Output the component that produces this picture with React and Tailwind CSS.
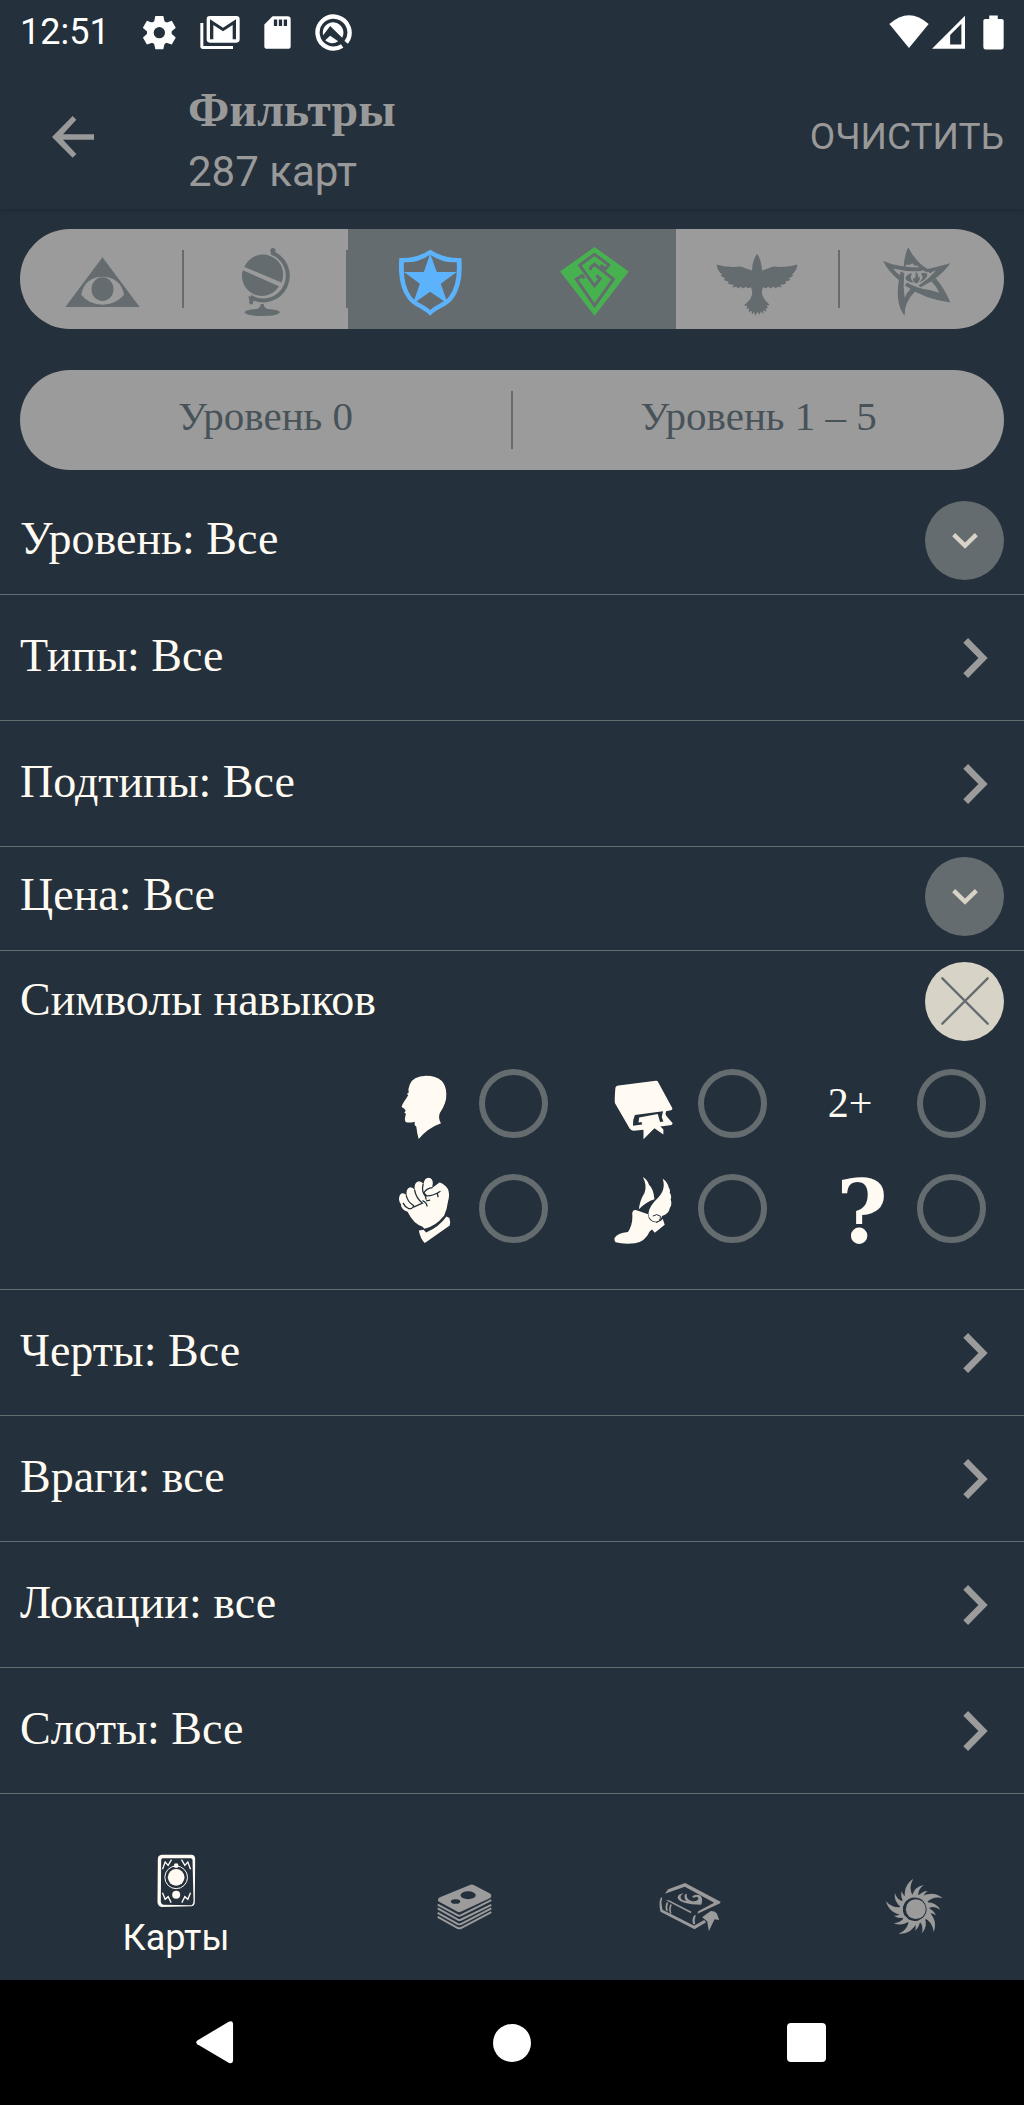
import React, { useState } from "react";

function Icon({ box, children, className = "" }) {
  return (
    <svg
      viewBox={box.join(" ")}
      width={Math.round(box[2] / 3)}
      height={Math.round(box[3] / 3)}
      fill="currentColor"
      aria-hidden="true"
      className={"shrink-0 " + className}
    >
      {children}
    </svg>
  );
}

/* ---------- status bar ---------- */

const gearTeeth = [0, 60, 120, 180, 240, 300];

function GearIcon() {
  return (
    <Icon box={[430, 39, 99, 111]}>
      <mask id="gear-hole">
        <rect x="430" y="39" width="99" height="111" fill="white" />
        <circle cx="479" cy="95" r="17" fill="black" />
      </mask>
      <g mask="url(#gear-hole)">
        <circle cx="479" cy="95" r="37" />
        {gearTeeth.map((a) => (
          <path key={a} d="M463 64 L467 45 H491 L495 64 Z" transform={`rotate(${a} 479 95)`} />
        ))}
      </g>
    </Icon>
  );
}

function MailIcon() {
  return (
    <Icon box={[593, 39, 120, 111]}>
      <path d="M594 66 H603 V135 H692 V144 H602 Q594 144 594 136 Z" />
      <path
        fillRule="evenodd"
        d="M622 45 H702 Q712 45 712 55 V115 Q712 125 702 125 H622 Q613 125 613 115 V55 Q613 45 622 45 Z M623 55 V115 H633 V72 L662 91 L691 72 V115 H701 V55 L662 80 Z"
      />
    </Icon>
  );
}

function SdIcon() {
  return (
    <Icon box={[785, 39, 82, 111]}>
      <path
        fillRule="evenodd"
        d="M811 45 H857 Q866 45 866 54 V136 Q866 144 857 144 H795 Q786 144 786 136 V70 Z M815 55 V75 H825 V55 Z M830 55 V75 H840 V55 Z M845 55 V75 H855 V55 Z"
      />
    </Icon>
  );
}

function QIcon() {
  return (
    <Icon box={[945, 39, 110, 111]}>
      <path
        fill="none"
        stroke="currentColor"
        strokeWidth="13"
        d="M1026 135 A48 48 0 1 1 1038 124"
      />
      <path d="M1014 121 A31 31 0 0 1 975 118 L990 104 Z" />
      <path d="M969 103 A31 31 0 1 1 1026 110 L990 75 Z" />
    </Icon>
  );
}

function WifiIcon() {
  return (
    <Icon box={[1130, 39, 120, 108]}>
      <path d="M1131 69 Q1190 16 1249 69 L1190 141 Z" />
    </Icon>
  );
}

function SignalIcon() {
  return (
    <Icon box={[1257, 39, 100, 108]}>
      <path fillRule="evenodd" d="M1357 44 V144 H1257 Z M1346 68 L1312 102 V131 H1346 Z" />
    </Icon>
  );
}

function BatteryIcon() {
  return (
    <Icon box={[1412, 39, 64, 108]}>
      <path d="M1431 43 H1457 V53 H1469 Q1475 53 1475 59 V139 Q1475 146 1469 146 H1419 Q1413 146 1413 139 V59 Q1413 53 1419 53 H1431 Z" />
    </Icon>
  );
}

/* ---------- faction icons ---------- */

function MysticIcon() {
  return (
    <Icon box={[192, 96, 230, 208]}>
      <path
        fillRule="evenodd"
        d="M198 277 L310 127 L422 277 Z M246 240 Q256 187 310 186 Q364 187 375 240 Q350 270 310 270 Q270 270 246 240 Z"
      />
      <ellipse cx="310" cy="223" rx="33" ry="36" />
    </Icon>
  );
}

function GlobeIcon() {
  return (
    <Icon box={[723, 96, 150, 208]}>
      <path d="M736 156 A60 60 0 0 1 848 203 Z" />
      <path d="M731 166 A60 60 0 0 0 840 214 Z" />
      <path fill="none" stroke="currentColor" strokeWidth="12" d="M817 113 A74 74 0 1 1 754 246" />
      <circle cx="822" cy="107" r="8" />
      <path d="M748 244 L762 250 L763 262 Q762 270 755 269 Q748 266 751 259 Z" />
      <path d="M785 268 H794 Q795 280 806 283 Q843 286 843 293 Q838 304 790 304 Q741 304 736 293 Q738 286 772 283 Q785 280 785 268 Z" />
    </Icon>
  );
}

function GuardianIcon() {
  return (
    <Icon box={[177, 96, 190, 208]}>
      <path
        fillRule="evenodd"
        d="M271 104 Q314 132 365 129 Q372 210 340 252 C325 275 292 280 271 303 C250 280 218 275 203 252 Q171 210 178 129 Q230 132 271 104 Z M271 119 Q234 144 192 142 Q188 210 214 245 C226 262 252 268 271 286 C290 268 316 262 328 245 Q355 210 351 142 Q308 144 271 119 Z"
      />
      <path d="M271 116 L291 171 L351 171 L303 207 L324 267 L271 231 L219 267 L240 207 L192 171 L252 171 Z" />
    </Icon>
  );
}

function RogueIcon() {
  return (
    <Icon box={[657, 96, 208, 208]}>
      <path d="M761 96 L864 170 L761 303 L657 170 Z" />
      <g fill="none" stroke="#656c6f" strokeWidth="9">
        <path d="M779 151 L794 162 L804 150 L761 118 L716 151 L761 213 L778 191 L766 182" />
        <path d="M749 165 V158 L761 148 L818 193 L761 273 L706 193 L724 182 L730 191" />
      </g>
    </Icon>
  );
}

function BirdIcon() {
  return (
    <Icon box={[140, 96, 246, 208]}>
      <path d="M141 149 Q170 159 214 155 Q232 162 248 167 Q249 135 263 116 Q277 135 278 167 Q294 162 312 155 Q356 159 385 149 Q384 163 374 174 L368 178 L373 181 Q366 188 358 190 L364 195 Q356 200 348 200 L351 205 Q343 211 333 209 L337 218 L326 216 L320 220 L312 216 L304 221 L297 216 L290 220 L281 217 Q276 232 279 240 Q284 256 301 270 L292 273 L297 281 L289 280 L292 291 L283 286 L282 298 L275 290 L271 300 L265 292 L257 303 L254 291 L248 300 L246 288 L238 293 L239 281 L230 282 L234 275 L224 271 Q243 258 248 240 Q250 232 245 217 L236 220 L229 216 L222 221 L214 216 L206 220 L200 216 L189 218 L193 209 Q183 211 175 205 L178 200 Q170 200 162 195 L168 190 Q160 188 153 181 L158 178 L152 174 Q142 163 141 149 Z" />
    </Icon>
  );
}

function ElderIcon() {
  return (
    <Icon box={[634, 96, 238, 208]}>
      <path d="M710 97 Q735 146 775 166 L769 173 Q748 166 736 151 L730 153 L723 145 L712 151 L706 148 L696 160 Q698 120 710 97 Z" />
      <path d="M837 145 Q806 190 747 217 L741 212 Q775 190 793 167 Q782 170 776 176 L764 163 Q798 156 837 145 Z" />
      <path d="M837 263 Q760 254 700 212 L706 203 Q740 222 766 224 Q788 228 803 234 Q797 216 779 199 L793 190 Q820 222 837 263 Z" />
      <path d="M699 303 Q665 262 687 170 L698 174 Q694 212 699 249 Q704 235 718 221 L732 229 Q698 262 699 303 Z" />
      <path d="M634 138 Q680 158 754 158 L751 168 Q705 172 665 161 Q672 174 687 183 L683 197 Q650 170 634 138 Z" />
      <path d="M722 175 Q712 190 726 203 Q706 202 701 190 Q706 177 722 175 Z" />
      <path d="M748 176 Q764 170 768 180 Q764 196 744 203 Q756 190 752 183 Q750 178 748 176 Z" />
      <path d="M732 170 Q742 178 740 190 L745 184 Q746 200 735 206 Q721 202 726 188 L730 192 Q734 182 732 170 Z" />
    </Icon>
  );
}

/* ---------- skill icons ---------- */

function HeadIcon() {
  return (
    <Icon box={[95, 378, 138, 222]}>
      <path d="M97 501 Q96 496 110 476 L117 465 L112 462 L118 458 Q116 445 121 434 Q130 408 170 407 Q231 408 231 463 Q232 490 212 518 Q205 532 215 550 Q176 564 148 597 Q143 580 141 560 L136 555 L136 545 Q120 550 109 546 Q104 538 110 521 L105 518 L109 512 L105 506 Z" />
    </Icon>
  );
}

function BookSkillIcon() {
  return (
    <Icon box={[732, 378, 178, 222]}>
      <path
        fillRule="evenodd"
        d="M746 436 L858 422 Q863 421 865 426 L908 505 Q909 510 904 511 L889 514 Q886 521 890 528 L909 550 L906 555 L872 560 L881 569 V584 L854 565 L821 598 V570 L792 573 Q782 572 777 562 L735 490 Q733 485 736 445 Q736 437 746 436 Z M795 525 Q788 540 789 558 L817 554 L815 546 L806 548 L808 533 L864 522 L871 546 L881 545 L876 531 L880 514 Z"
      />
    </Icon>
  );
}

function FistIcon() {
  return (
    <Icon box={[84, 696, 158, 214]}>
      <path d="M86 775 Q87 757 98 757 Q106 757 109 765 Q106 742 120 739 Q129 739 134 748 Q130 724 146 721 Q155 721 160 729 Q163 710 175 710 Q189 712 188 728 L186 741 L208 725 Q222 728 234 745 Q240 762 234 781 Q231 805 222 825 Q195 858 163 864 L156 857 Q130 850 112 813 Q92 805 92 790 Q87 785 86 775 Z" />
      <path d="M146 869 L160 867 L168 875 Q208 858 229 827 L238 832 Q242 843 239 854 L164 907 Q150 893 146 869 Z" />
      <path
        fill="none"
        stroke="#24303c"
        strokeWidth="4"
        d="M108 763 Q111 782 130 794 Q128 806 113 803 M98 786 Q103 797 115 803 M133 747 Q138 773 157 787 L150 790 L130 799 M159 729 Q153 753 166 766 L168 776 M187 740 Q170 741 161 756 L170 765 Q190 765 211 751 M202 758 L204 769 M157 779 Q170 785 171 797 M168 780 L180 778"
      />
    </Icon>
  );
}

function FootIcon() {
  return (
    <Icon box={[733, 696, 175, 214]}>
      <path d="M735 891 Q743 878 775 874 Q791 851 788 818 Q789 805 801 808 L836 820 Q836 843 861 845 Q876 842 880 834 L886 852 L856 876 L848 866 L841 872 Q826 905 796 908 Q760 911 738 905 Q733 900 735 891 Z" />
      <path d="M820 708 Q834 716 839 732 Q852 742 855 775 Q830 783 808 805 Q811 778 825 756 Q834 735 820 708 Z" />
      <path d="M880 713 Q895 722 898 740 Q904 748 901 755 Q908 766 904 776 Q909 790 902 800 Q898 820 878 826 Q874 842 860 843 Q838 840 837 818 Q837 798 868 768 Q890 745 880 713 Z" />
      <path fill="none" stroke="#24303c" strokeWidth="3" d="M850 826 Q862 817 873 826 Q874 842 860 845 M815 800 L838 810" />
    </Icon>
  );
}

/* ---------- tab bar icons ---------- */

function CardIcon() {
  return (
    <Icon box={[470, 100, 116, 162]}>
      <path
        fillRule="evenodd"
        d="M484 102 H572 Q584 102 584 115 L583 245 Q582 257 572 257 L484 259 Q472 257 471 245 L472 115 Q472 103 484 102 Z M487 113 Q482 113 482 119 L481 243 Q482 251 489 252 L568 254 Q579 254 579 240 L576 118 Q576 113 570 113 Z"
      />
      <circle cx="527" cy="170" r="25" />
      <circle cx="527" cy="170" r="34" fill="none" stroke="currentColor" strokeWidth="3" />
      <circle cx="527" cy="135" r="7" />
      <circle cx="527" cy="222" r="12" />
      <path
        fill="none"
        stroke="currentColor"
        strokeWidth="4"
        d="M486 146 L494 124 L503 134 L513 117 M570 146 L562 124 L553 134 L543 117 M486 216 L494 236 L503 228 L512 246 M570 216 L562 236 L553 228 L544 246"
      />
    </Icon>
  );
}

function DeckIcon() {
  return (
    <Icon box={[1309, 198, 166, 139]}>
      <path
        fillRule="evenodd"
        d="M1410 200 Q1415 198 1420 201 L1469 227 Q1474 230 1473 235 Q1472 239 1467 242 L1381 282 Q1376 284 1371 282 L1314 251 Q1311 249 1312 244 Q1313 240 1318 238 Z M1380 232 A23 12 0 1 0 1426 232 A23 12 0 1 0 1380 232 Z M1351 251 A14 7 0 1 0 1379 251 A14 7 0 1 0 1351 251 Z"
      />
      <g fill="none" stroke="currentColor" strokeWidth="6">
        <path d="M1311 260 L1372 293 Q1376 295 1381 293 L1473 247" />
        <path d="M1311 272 L1372 306 Q1376 308 1381 306 L1473 261" />
        <path d="M1311 285 L1372 319 Q1376 321 1381 319 L1473 272" />
        <path d="M1311 297 L1372 331 Q1376 333 1381 331 L1473 283" />
      </g>
    </Icon>
  );
}

function CampaignIcon() {
  return (
    <Icon box={[431, 194, 197, 147]}>
      <path d="M460 226 L470 213 L521 194 L627 250 L626 255 L558 286 L560 279 L608 253 L520 205 Z" />
      <path d="M452 236 Q447 255 453 274 L548 322 L578 305 L584 312 L549 333 L447 280 Q441 255 447 240 Z" />
      <path d="M473 246 L540 280 L538 285 L463 246 Z" />
      <path d="M466 251 Q459 265 464 277 L469 279 Q465 265 470 254 Z M477 257 Q470 270 475 284 L480 286 Q475 272 481 260 Z" />
      <path d="M548 291 Q540 303 545 318 L551 318 Q548 303 553 291 Z" />
      <path d="M572 297 L584 288 L598 278 Q612 278 617 288 L623 305 L609 303 L592 339 L587 309 Z" />
      <path d="M517 225 Q500 226 498 238 Q505 258 569 259 Q577 240 565 231 Q550 225 541 236 L549 238 Q556 231 561 240 Q558 251 541 248 Q522 243 526 226 Q519 226 519 233 Q518 243 525 248 Q508 246 507 235 Q508 229 517 225 Z" />
    </Icon>
  );
}

const rays = [0, 72, 144, 216, 288];

function SunIcon() {
  return (
    <Icon box={[1105, 173, 190, 176]}>
      <circle cx="1210" cy="266" r="30" />
      <path
        fillRule="evenodd"
        d="M1207 221 A45 45 0 1 1 1206 221 Z M1207 231 A36 36 0 1 0 1237 286 A36 36 0 0 0 1207 231 Z"
      />
      {rays.map((a) => (
        <g key={a} transform={`rotate(${a} 1207 265)`}>
          <path d="M1178 238 Q1170 196 1202 175 Q1186 204 1202 228 Z" />
          <path d="M1198 228 Q1206 197 1234 193 Q1214 206 1218 230 Z" />
          <path d="M1215 228 Q1228 211 1246 211 Q1232 218 1233 236 Z" />
        </g>
      ))}
    </Icon>
  );
}

/* ---------- page ---------- */

const factions = [
  { id: "mystic", label: "Мистик", icon: MysticIcon, divider: true },
  { id: "seeker", label: "Искатель", icon: GlobeIcon, divider: true },
  { id: "guardian", label: "Защитник", icon: GuardianIcon, active: "text-[#5db3fb]" },
  { id: "rogue", label: "Ловкач", icon: RogueIcon, active: "text-[#48b14f]" },
  { id: "survivor", label: "Выживший", icon: BirdIcon, divider: true },
  { id: "neutral", label: "Нейтральные", icon: ElderIcon },
];

const skills = [
  { id: "willpower", label: "Воля", mark: <HeadIcon /> },
  { id: "intellect", label: "Интеллект", mark: <BookSkillIcon /> },
  {
    id: "double",
    label: "2+",
    mark: <span className="pr-6 font-['Liberation_Serif',serif] text-[42px]">2+</span>,
  },
  { id: "combat", label: "Бой", mark: <FistIcon /> },
  { id: "agility", label: "Ловкость", mark: <FootIcon /> },
  {
    id: "wild",
    label: "Любой",
    mark: (
      <span className="pt-2 font-['DejaVu_Serif',serif] text-[88px] leading-[69px] font-bold">?</span>
    ),
  },
];

function NavRow({ children }) {
  return (
    <button
      type="button"
      className="flex h-[126px] w-full items-center justify-between border-b border-[#656c6f] pr-9 pl-5 text-left"
    >
      <span className="pb-1">{children}</span>
      <Icon box={[0, 0, 75, 120]} className="text-[#9b9b9b]">
        <path fill="none" stroke="currentColor" strokeWidth="20" d="M8 7 L60 60 L8 113" />
      </Icon>
    </button>
  );
}

function ToggleRow({ children, open = false, line = true }) {
  return (
    <div
      className={
        "flex h-[104px] items-center justify-between px-5 pb-1 " +
        (line ? "border-b border-[#656c6f]" : "")
      }
    >
      <span className="pb-1">{children}</span>
      <button
        type="button"
        aria-expanded={open}
        aria-label="Развернуть"
        className={
          "flex size-[79px] items-center justify-center rounded-full " +
          (open ? "bg-[#d8d3c7] text-[#656c6f]" : "bg-[#656c6f] text-[#d8d3c7]")
        }
      >
        {open ? (
          <Icon box={[0, 0, 144, 144]}>
            <path
              fill="none"
              stroke="currentColor"
              strokeWidth="7"
              strokeLinecap="round"
              d="M4 4 L140 140 M140 4 L4 140"
            />
          </Icon>
        ) : (
          <Icon box={[0, 0, 78, 48]}>
            <path fill="none" stroke="currentColor" strokeWidth="13" d="M5 5 L39 38 L73 5" />
          </Icon>
        )}
      </button>
    </div>
  );
}

export default function App() {
  const [selected, setSelected] = useState(["guardian", "rogue"]);
  const toggle = (id) =>
    setSelected((s) => (s.includes(id) ? s.filter((x) => x !== id) : [...s, id]));

  return (
    <div className="flex min-h-screen flex-col bg-[#24303c] font-[Roboto,sans-serif]">
      <div className="flex h-16 items-center justify-between px-5 text-white">
        <div className="flex items-center">
          <span className="w-[123px] text-[36px]">12:51</span>
          <div className="flex items-center gap-6">
            <GearIcon />
            <MailIcon />
            <SdIcon />
            <QIcon />
          </div>
        </div>
        <div className="flex items-center">
          <WifiIcon />
          <span className="w-[3px]" />
          <SignalIcon />
          <span className="w-[18px]" />
          <BatteryIcon />
        </div>
      </div>

      <header className="flex h-[145px] items-center pr-5 pl-[52px] text-[#999999] shadow-[0_2px_4px_rgba(0,0,0,0.15)]">
        <button type="button" aria-label="Назад">
          <Icon box={[157, 344, 126, 126]}>
            <path d="M283 399 V415 H190 L230 458 L219 469 L157 407 L219 344 L230 355 L190 399 Z" />
          </Icon>
        </button>
        <div className="ml-[94px] flex-1 pt-2">
          <h1 className="font-['Liberation_Serif',serif] text-[48px] leading-[62px] font-bold">
            Фильтры
          </h1>
          <p className="text-[42px] leading-[62px]">287 карт</p>
        </div>
        <button type="button" className="text-[37px]">
          ОЧИСТИТЬ
        </button>
      </header>

      <main className="flex-1 pt-5 font-['Liberation_Serif',serif] text-[46px] text-[#fffbf2]">
        <div className="mx-5 flex h-[100px] overflow-hidden rounded-full bg-[#9b9b9b]">
          {factions.map(({ id, label, icon: Glyph, divider, active }) => {
            const on = selected.includes(id);
            return (
              <button
                key={id}
                type="button"
                aria-label={label}
                aria-pressed={on}
                onClick={() => toggle(id)}
                className={
                  "flex flex-1 items-center " +
                  (on ? "bg-[#656c6f] " + (active || "text-white") : "text-[#656c6f]")
                }
              >
                <span
                  className={
                    "flex h-[58px] w-full items-center justify-center pt-1 " +
                    (divider ? "border-r-2 border-[#656c6f]" : "")
                  }
                >
                  <Glyph />
                </span>
              </button>
            );
          })}
        </div>

        <div className="mx-5 mt-[41px] flex h-[100px] items-center rounded-full bg-[#9b9b9b] text-[41px] text-[#475259]">
          <button type="button" className="h-[58px] flex-1 border-r-2 border-[#656c6f] pb-2 leading-[50px]">
            Уровень 0
          </button>
          <button type="button" className="h-[58px] flex-1 pb-2 leading-[50px]">
            Уровень 1 – 5
          </button>
        </div>

        <div className="mt-[21px]">
          <ToggleRow>Уровень: Все</ToggleRow>
          <NavRow>Типы: Все</NavRow>
          <NavRow>Подтипы: Все</NavRow>
          <ToggleRow>Цена: Все</ToggleRow>
          <section className="border-b border-[#656c6f] pb-[46px]">
            <ToggleRow open line={false}>
              Символы навыков
            </ToggleRow>
            <div className="flex justify-end pt-[13px] pr-[38px]">
              <div className="grid grid-cols-3 gap-x-[61px] gap-y-[35px]">
                {skills.map((s) => (
                  <label key={s.id} className="flex h-[70px] items-center gap-[21px]">
                    <span className="flex w-[68px] items-center justify-center">{s.mark}</span>
                    <input
                      type="checkbox"
                      aria-label={s.label}
                      className="size-[69px] appearance-none rounded-full border-[6px] border-[#656c6f] checked:bg-[#656c6f]"
                    />
                  </label>
                ))}
              </div>
            </div>
          </section>
          <NavRow>Черты: Все</NavRow>
          <NavRow>Враги: все</NavRow>
          <NavRow>Локации: все</NavRow>
          <NavRow>Слоты: Все</NavRow>
        </div>
      </main>

      <nav className="flex h-[150px] text-[#9b9b9b]">
        <a
          href="#cards"
          aria-current="page"
          className="flex flex-11 flex-col items-center justify-center gap-2 pt-1 text-[#fffbf2]"
        >
          <CardIcon />
          <span className="text-[36px] leading-[44px]">Карты</span>
        </a>
        <a href="#decks" aria-label="Колоды" className="flex flex-7 items-center justify-center pt-1">
          <DeckIcon />
        </a>
        <a href="#campaigns" aria-label="Кампании" className="flex flex-7 items-center justify-center pt-1">
          <CampaignIcon />
        </a>
        <a href="#settings" aria-label="Настройки" className="flex flex-7 items-center justify-center pt-1">
          <SunIcon />
        </a>
      </nav>

      <div className="grid h-[125px] grid-cols-3 bg-black px-[70px] text-white">
        <button type="button" aria-label="Назад" className="flex items-center justify-center">
          <Icon box={[587, 604, 128, 130]}>
            <path d="M590 663 L685 606 Q698 602 698 614 V724 Q697 734 686 731 L590 674 Q584 668 590 663 Z" />
          </Icon>
        </button>
        <button type="button" aria-label="Домой" className="flex items-center justify-center">
          <span className="size-[38px] rounded-full bg-white" />
        </button>
        <button type="button" aria-label="Обзор" className="flex items-center justify-center">
          <span className="size-[39px] rounded bg-white" />
        </button>
      </div>
    </div>
  );
}
